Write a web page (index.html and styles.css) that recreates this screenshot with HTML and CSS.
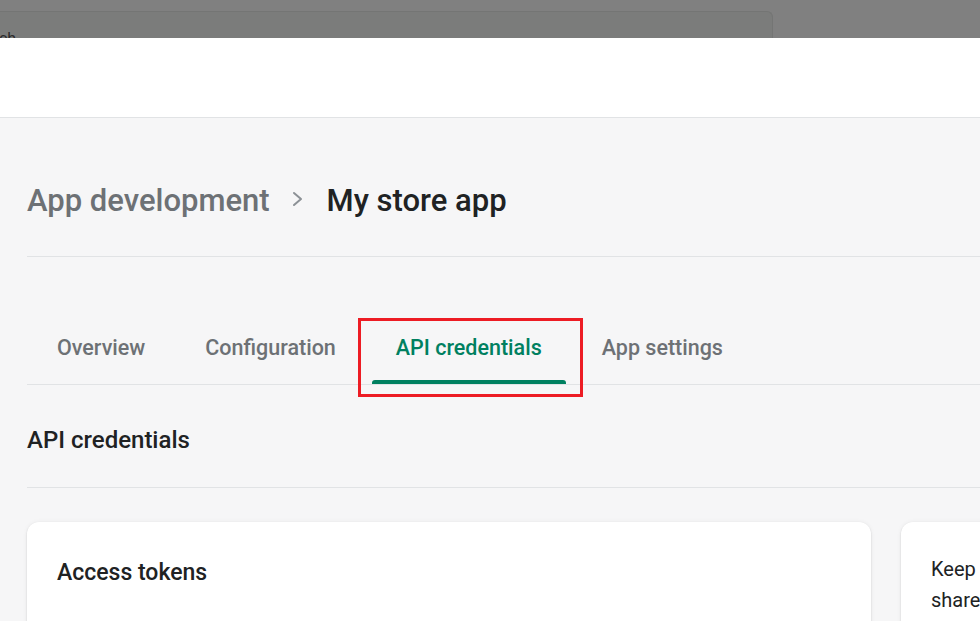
FILE: index.html
```html
<!DOCTYPE html>
<html lang="en">
<head>
  <meta charset="UTF-8" />
  <title>My store app – API credentials</title>
  <link rel="stylesheet" href="styles.css">
</head>
<body>
  <div class="backdrop">
    <div class="search">Search</div>
  </div>

  <header class="topbar"></header>

  <main class="page">
    <div class="breadcrumb">
      <span class="crumb">App development</span>
      <svg class="chevron" width="16" height="20" viewBox="0 0 16 20">
        <path d="M4 4l7 6-7 6" fill="none" stroke="#8c9196" stroke-width="2" stroke-linecap="round" stroke-linejoin="round"/>
      </svg>
      <h1>My store app</h1>
    </div>

    <nav class="tabs">
      <a class="tab">Overview</a>
      <a class="tab">Configuration</a>
      <a class="tab active">API credentials</a>
      <a class="tab">App settings</a>
    </nav>

    <h2 class="section-title">API credentials</h2>

    <div class="cards">
      <div class="card main-card">
        <h3>Access tokens</h3>
      </div>
      <div class="card side-card">
        <p>Keep your access tokens secure. Only share them with developers that you trust to safely access your data.</p>
      </div>
    </div>
  </main>
</body>
</html>
```

FILE: styles.css
```css
:root {
  --bg: #f6f6f7;
  --text: #202223;
  --subdued: #6d7175;
  --border: #e1e3e5;
  --green: #008060;
}

body {
  margin: 0;
  font-family: Roboto, 'Open Sans', sans-serif;
  background: var(--bg);
  color: var(--text);
  overflow: hidden;
}

.backdrop {
  height: 38px;
  background: #808080;
  padding-top: 11px;
  box-sizing: border-box;
  display: flex;
  overflow: hidden;
}

.search {
  width: 805px;
  flex: none;
  margin-left: -34px;
  background: #7b7c7b;
  border: 1px solid #747574;
  border-bottom: none;
  border-radius: 0 6px 0 0;
  color: #2b2b2b;
  font-size: 16px;
  padding: 17px 0 0 0;
  line-height: 20px;
  overflow: hidden;
  height: 10px;
}

.topbar {
  height: 79px;
  background: #fff;
  border-bottom: 1px solid var(--border);
}

.page {
  padding-left: 27px;
}

.breadcrumb {
  display: flex;
  align-items: center;
  height: 139px;
  box-sizing: border-box;
  padding-top: 26px;
  border-bottom: 1px solid var(--border);
}

.crumb {
  font-size: 31px;
  font-weight: 500;
  color: var(--subdued);
  white-space: nowrap;
}

.chevron {
  flex: none;
  margin: 0 21px 2px 20px;
}

.breadcrumb h1 {
  margin: 0;
  font-size: 31px;
  font-weight: 500;
  color: var(--text);
  white-space: nowrap;
}

.tabs {
  display: flex;
  margin-top: 62px;
  border-bottom: 1px solid var(--border);
}

.tab {
  display: block;
  padding: 14px 30px 21px;
  font-size: 21.5px;
  line-height: 30px;
  font-weight: 500;
  color: var(--subdued);
  white-space: nowrap;
  position: relative;
}

.tab.active {
  color: var(--green);
}

/* red annotation frame around the active tab */
.tab.active::before {
  content: "";
  position: absolute;
  top: -1px;
  left: -8px;
  right: -11px;
  bottom: -13px;
  border: 3px solid #ed1c24;
}

.tab.active::after {
  content: "";
  position: absolute;
  left: 6px;
  right: 6px;
  bottom: 0;
  height: 4px;
  background: var(--green);
  border-radius: 3px 3px 0 0;
}

.section-title {
  margin: 0;
  height: 103px;
  box-sizing: border-box;
  padding-top: 8px;
  display: flex;
  align-items: center;
  font-size: 24px;
  font-weight: 500;
  border-bottom: 1px solid var(--border);
}

.cards {
  display: flex;
  gap: 30px;
  margin-top: 34px;
}

.card {
  flex: none;
  background: #fff;
  border-radius: 12px;
  box-shadow: 0 0 5px rgba(23, 24, 24, 0.05), 0 1px 2px rgba(0, 0, 0, 0.15);
  height: 200px;
  padding: 34px 30px;
  box-sizing: border-box;
}

.main-card {
  width: 844px;
}

.main-card h3 {
  margin: 0;
  font-size: 23px;
  line-height: 34px;
  font-weight: 500;
}

.side-card {
  width: 420px;
  padding-top: 32px;
}

.side-card p {
  margin: 0;
  width: 360px;
  font-size: 20px;
  line-height: 31px;
  color: var(--text);
}
```
